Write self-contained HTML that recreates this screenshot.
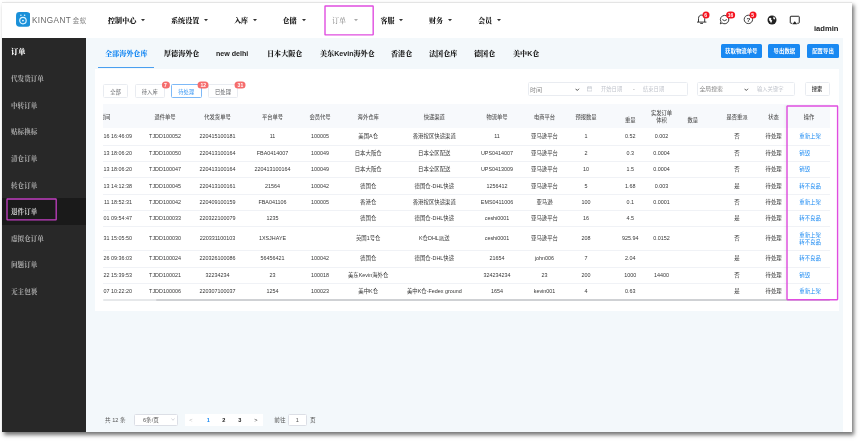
<!DOCTYPE html><html lang="zh-CN"><head><meta charset="utf-8"><title>退件订单</title><style>
*{box-sizing:border-box;margin:0;padding:0}
html,body{width:862px;height:442px;overflow:hidden;background:#fff}
body{position:relative;font-family:"Liberation Sans","Noto Sans CJK SC",sans-serif;color:#222;-webkit-font-smoothing:antialiased}
#wrap{position:absolute;left:0;top:0;width:862px;height:442px;will-change:transform}
.abs{position:absolute}
.t{position:absolute;white-space:nowrap;line-height:1;transform:translate(-50%,calc(-50% + 0.12em))}
.l{position:absolute;white-space:nowrap;line-height:1;transform:translate(0,calc(-50% + 0.12em))}
#frame{position:absolute;left:2px;top:2px;width:850px;height:430px;background:#fff;box-shadow:2px 3px 4px rgba(0,0,0,.55)}
#topline{position:absolute;left:2px;top:2px;width:850px;height:1px;background:#e4e4e4}
#side{position:absolute;left:2px;top:38px;width:84px;height:394px;background:#282828}
#main{position:absolute;left:86px;top:38px;width:757px;height:394px;background:#f3f8fb}
#panel{position:absolute;left:94.5px;top:69px;width:744.5px;height:242px;background:#fff}
.nav{font-size:7.1px;font-weight:900;color:#222;font-family:"Liberation Sans","Noto Serif CJK SC",serif}
.caret{position:absolute;width:0;height:0;border-left:1.9px solid transparent;border-right:1.9px solid transparent;border-top:2.1px solid #333}
.tab{font-size:7.1px;font-weight:900;color:#222;font-family:"Liberation Sans","Noto Serif CJK SC",serif}
.sb{font-size:6.6px;color:#9e9e9e;font-weight:900;font-family:"Liberation Sans","Noto Serif CJK SC",serif}
.sbh{font-size:7.2px;font-weight:900;color:#fff;font-family:"Liberation Sans","Noto Serif CJK SC",serif}
.bbtn{position:absolute;top:44.3px;height:13.4px;background:#1989f2;border-radius:1.5px;color:#fff;font-size:5.4px;font-weight:bold;text-align:center;line-height:14.8px;white-space:nowrap}
.obtn{position:absolute;top:83.7px;height:14px;border:1px solid #e9ecf1;border-radius:1.5px;background:#fff;color:#606266;font-size:5.3px;text-align:center;line-height:14.3px;white-space:nowrap}
.badge{position:absolute;height:7px;min-width:7px;border-radius:3.5px;background:#f5131f;color:#fff;font-size:5px;font-weight:bold;text-align:center;line-height:7.7px;padding:0 2.1px;transform:translate(-50%,-50%);white-space:nowrap}
.b2{background:#f56c6c;height:7.2px;border-radius:3.6px;line-height:8px;padding:0 2.7px}
.inp{position:absolute;top:82.3px;height:13.3px;border:1px solid #e9ecf1;border-radius:1.5px;background:#fff}
.th{font-size:5.3px;color:#5a5a5a;font-weight:500}
.td{font-size:5.4px;color:#363636}
.op{font-size:5.4px;color:#1989f2}
.row{position:absolute;left:103px;width:726.5px;height:1px;background:#f0f2f6}
.mg{position:absolute;border:0.9px solid #e23ee2;border-radius:0.5px}
.pg{font-size:5.6px;color:#555}
</style></head><body><div id="wrap">
<div id="frame"></div><div id="topline"></div>
<div id="side"></div><div id="main"></div><div id="panel"></div>
<svg class="abs" style="left:15.5px;top:11.9px" width="14.4" height="14.8" viewBox="0 0 31 32">
<rect x="0" y="0" width="31" height="32" rx="7.5" fill="#1a90d9"/>
<circle cx="15" cy="18.5" r="7" fill="none" stroke="#d9f2ff" stroke-width="2.6"/>
<circle cx="15" cy="18.5" r="2" fill="#e6f6ff"/>
<circle cx="10.5" cy="7" r="1.7" fill="#d9f2ff"/><circle cx="18.5" cy="7" r="1.7" fill="#d9f2ff"/>
</svg>
<span class="l " style="left:32px;top:20.4px;font-size:8.2px;color:#686868;letter-spacing:0.4px">KINGANT</span>
<span class="l " style="left:72.6px;top:20.6px;font-size:6.8px;color:#888">金蚁</span>
<span class="l nav" style="left:108px;top:20.8px;">控制中心</span>
<svg class="abs" style="left:140.8px;top:19.4px" width="4" height="2.2" viewBox="0 0 40 22"><path d="M0 0 H40 L20 22 Z" fill="#333"/></svg>
<span class="l nav" style="left:171px;top:20.8px;">系统设置</span>
<svg class="abs" style="left:203.8px;top:19.4px" width="4" height="2.2" viewBox="0 0 40 22"><path d="M0 0 H40 L20 22 Z" fill="#333"/></svg>
<span class="l nav" style="left:234px;top:20.8px;">入库</span>
<svg class="abs" style="left:252.8px;top:19.4px" width="4" height="2.2" viewBox="0 0 40 22"><path d="M0 0 H40 L20 22 Z" fill="#333"/></svg>
<span class="l nav" style="left:282.5px;top:20.8px;">仓储</span>
<svg class="abs" style="left:301.8px;top:19.4px" width="4" height="2.2" viewBox="0 0 40 22"><path d="M0 0 H40 L20 22 Z" fill="#333"/></svg>
<span class="l nav" style="left:332px;top:20.8px;color:#969696;font-weight:500">订单</span>
<svg class="abs" style="left:354.3px;top:19.4px" width="4" height="2.2" viewBox="0 0 40 22"><path d="M0 0 H40 L20 22 Z" fill="#aaa"/></svg>
<span class="l nav" style="left:380.5px;top:20.8px;">客服</span>
<svg class="abs" style="left:399.3px;top:19.4px" width="4" height="2.2" viewBox="0 0 40 22"><path d="M0 0 H40 L20 22 Z" fill="#333"/></svg>
<span class="l nav" style="left:429px;top:20.8px;">财务</span>
<svg class="abs" style="left:448.3px;top:19.4px" width="4" height="2.2" viewBox="0 0 40 22"><path d="M0 0 H40 L20 22 Z" fill="#333"/></svg>
<span class="l nav" style="left:478px;top:20.8px;">会员</span>
<svg class="abs" style="left:496.8px;top:19.4px" width="4" height="2.2" viewBox="0 0 40 22"><path d="M0 0 H40 L20 22 Z" fill="#333"/></svg>
<svg class="abs" style="left:323.1px;top:4.1px" width="52.2" height="32.9" viewBox="0 0 52.2 32.9"><rect x="2" y="2" width="48.2" height="28.9" rx="0.4" fill="none" stroke="#e04de0" stroke-width="1.4"/></svg>
<svg class="abs" style="left:695px;top:12px" width="14" height="14" viewBox="0 0 140 140" fill="none" stroke="#222" stroke-width="9">
<path d="M35 100 V66 C35 42 48 31 66 31 C84 31 97 42 97 66 V100" stroke-linejoin="round"/>
<path d="M24 101 H110" stroke-linecap="round"/><path d="M56 114 H76" stroke-linecap="round"/></svg>
<svg class="abs" style="left:718.9px;top:13.9px" width="11.2" height="11.2" viewBox="0 0 20 20" fill="none" stroke="#222" stroke-width="1.6">
<path d="M10 2.500 A7.500 7.500 0 1 1 5.500 16 L2.300 17.600 L3.500 13.800 A7.500 7.500 0 0 1 10 2.500 Z" stroke-linejoin="round"/>
<path d="M6.500 10.500 Q10 14 13.500 10.500" stroke-linecap="round"/></svg>
<svg class="abs" style="left:742.9px;top:14.1px" width="10.8" height="10.8" viewBox="0 0 20 20" fill="none" stroke="#222" stroke-width="1.6">
<circle cx="10" cy="10" r="7.800"/></svg>
<span class="t " style="left:748.4px;top:18.9px;font-size:6.2px;font-weight:bold;color:#222">?</span>
<svg class="abs" style="left:766.6px;top:14.5px" width="10" height="10" viewBox="0 0 20 20">
<circle cx="10" cy="10" r="9" fill="#222"/>
<path d="M4 6.500 L7 5.500 L9 7.500 L8 9.500 L10.500 11 L9.500 13.500 L8 16.500 L6.500 13 L4.500 11 Z" fill="#fff"/>
<path d="M11.500 2.800 L15 4.500 L16.500 8 L14 9 L12.500 7 L13 5 Z" fill="#fff"/></svg>
<svg class="abs" style="left:789px;top:14.8px" width="11.500" height="10" viewBox="0 0 23 20" fill="none" stroke="#222" stroke-width="2">
<path d="M6.5 16.5 H4 A1.500 1.500 0 0 1 2.500 15 V4 A1.500 1.500 0 0 1 4 2.500 H19 A1.500 1.500 0 0 1 20.500 4 V15 A1.500 1.500 0 0 1 19 16.500 H16.5" stroke-linejoin="round"/>
<path d="M11.500 12.5 L16.5 18.5 H6.5 Z" fill="#222" stroke="none"/></svg>
<span class="badge" style="left:705.6px;top:15.3px">6</span>
<span class="badge" style="left:730.6px;top:15.3px">16</span>
<span class="badge" style="left:752.6px;top:15.3px">5</span>
<span class="l " style="left:814px;top:27.7px;font-size:7.6px;font-weight:bold;color:#222">iadmin</span>
<div class="abs" style="left:2px;top:198px;width:84px;height:26.5px;background:#1a1a1a"></div>
<span class="l sbh" style="left:11px;top:51.1px;">订单</span>
<span class="l sb" style="left:11px;top:78.7px;">代发货订单</span>
<span class="l sb" style="left:11px;top:105.6px;">中转订单</span>
<span class="l sb" style="left:11px;top:132.1px;">贴标换标</span>
<span class="l sb" style="left:11px;top:158.8px;">清仓订单</span>
<span class="l sb" style="left:11px;top:185.6px;">转仓订单</span>
<span class="l sb" style="left:11px;top:211.9px;color:#d6d6d6;font-weight:700">退件订单</span>
<span class="l sb" style="left:11px;top:238.7px;">虚拟仓订单</span>
<span class="l sb" style="left:11px;top:265.2px;">问题订单</span>
<span class="l sb" style="left:11px;top:291.8px;">无主包裹</span>
<svg class="abs" style="left:5.4px;top:197.4px" width="53.2" height="24.9" viewBox="0 0 53.2 24.9"><rect x="2" y="2" width="49.2" height="20.9" rx="0.4" fill="none" stroke="#c23fc2" stroke-width="1.3"/></svg>
<span class="l tab" style="left:105px;top:53.7px;color:#1989f2">全部海外仓库</span>
<span class="l tab" style="left:164px;top:53.7px;">厚德海外仓</span>
<span class="l tab" style="left:216px;top:53.7px;">new delhi</span>
<span class="l tab" style="left:267px;top:53.7px;">日本大阪仓</span>
<span class="l tab" style="left:320px;top:53.7px;">美东Kevin海外仓</span>
<span class="l tab" style="left:391px;top:53.7px;">香港仓</span>
<span class="l tab" style="left:429px;top:53.7px;">法国仓库</span>
<span class="l tab" style="left:474px;top:53.7px;">德国仓</span>
<span class="l tab" style="left:513px;top:53.7px;">美中K仓</span>
<div class="abs" style="left:98px;top:67.4px;width:56px;height:1px;background:#4a9ff0"></div>
<div class="bbtn" style="left:721px;width:40.6px">获取物流单号</div>
<div class="bbtn" style="left:768.4px;width:32px">导出数据</div>
<div class="bbtn" style="left:807px;width:32px">配置导出</div>
<div class="obtn" style="left:103px;width:25px;">全部</div>
<div class="obtn" style="left:135px;width:29.5px;">待入库</div>
<div class="obtn" style="left:171px;width:30.5px;border-color:#7db9f7;color:#3a97f3;">待处理</div>
<div class="obtn" style="left:208px;width:30px;">已处理</div>
<span class="badge b2" style="left:165.5px;top:84.5px">7</span>
<span class="badge b2" style="left:203.2px;top:84.5px">12</span>
<span class="badge b2" style="left:240.4px;top:84.5px">31</span>
<div class="inp" style="left:528px;width:159.500px"></div>
<span class="l " style="left:530px;top:89px;font-size:6px;color:#888">时间</span>
<svg class="abs" style="left:575px;top:87.500px" width="4.500" height="3.500" viewBox="0 0 9 7" fill="none" stroke="#444" stroke-width="1.800"><path d="M1 1.500 L4.500 5 L8 1.500"/></svg>
<svg class="abs" style="left:586.500px;top:86px" width="5.500" height="5.500" viewBox="0 0 11 11" fill="none" stroke="#c0c4cc" stroke-width="1.200"><rect x="1" y="2" width="9" height="8"/><path d="M1 4.500 H10 M3.500 0.500 V3 M7.500 0.500 V3"/></svg>
<span class="l " style="left:601px;top:89px;font-size:5.3px;color:#c0c4cc">开始日期</span>
<span class="t " style="left:634px;top:89px;font-size:5.3px;color:#999">-</span>
<span class="l " style="left:643px;top:89px;font-size:5.3px;color:#c0c4cc">结束日期</span>
<div class="inp" style="left:697.300px;width:98.200px"></div>
<span class="l " style="left:699.4px;top:89px;font-size:5.900px;color:#888">全局搜索</span>
<svg class="abs" style="left:744.300px;top:87.500px" width="4.500" height="3.500" viewBox="0 0 9 7" fill="none" stroke="#444" stroke-width="1.800"><path d="M1 1.500 L4.500 5 L8 1.500"/></svg>
<span class="l " style="left:757px;top:89px;font-size:5.300px;color:#c0c4cc">输入关键字</span>
<div class="obtn" style="left:804.600px;top:82.3px;width:25px;height:13.3px;line-height:13.6px;color:#333;font-weight:500">搜索</div>
<div class="abs" style="left:103px;top:104px;width:726.500px;height:24px;background:#f7f9fc"></div>
<span class="t th" style="left:165px;top:116.6px;">退件单号</span>
<span class="t th" style="left:217.5px;top:116.6px;">代发货单号</span>
<span class="t th" style="left:272.5px;top:116.6px;">平台单号</span>
<span class="t th" style="left:320px;top:116.6px;">会员代号</span>
<span class="t th" style="left:368.2px;top:116.6px;">海外仓库</span>
<span class="t th" style="left:434.3px;top:116.6px;">快递渠道</span>
<span class="t th" style="left:497px;top:116.6px;">物流单号</span>
<span class="t th" style="left:544.5px;top:116.6px;">电商平台</span>
<span class="t th" style="left:586px;top:116.6px;">预报数量</span>
<span class="t th" style="left:630.2px;top:120px;">重量</span>
<span class="t th" style="left:661.5px;top:113.2px;">实发订单</span>
<span class="t th" style="left:661.5px;top:119.5px;">体积</span>
<span class="t th" style="left:692.8px;top:120px;">数量</span>
<span class="t th" style="left:737px;top:116.6px;">是否重派</span>
<span class="t th" style="left:773.6px;top:116.6px;">状态</span>
<div class="row" style="top:144.6px"></div>
<div class="row" style="top:161px"></div>
<div class="row" style="top:177.3px"></div>
<div class="row" style="top:193.6px"></div>
<div class="row" style="top:209.8px"></div>
<div class="row" style="top:226.2px"></div>
<div class="row" style="top:250.2px"></div>
<div class="row" style="top:266.6px"></div>
<div class="row" style="top:283px"></div>
<span class="t td" style="left:165px;top:136.3px;">TJDD100052</span>
<span class="t td" style="left:217.5px;top:136.3px;">220415100181</span>
<span class="t td" style="left:272.5px;top:136.3px;">11</span>
<span class="t td" style="left:320px;top:136.3px;">100005</span>
<span class="t td" style="left:368.2px;top:136.3px;">美国A仓</span>
<span class="t td" style="left:434.3px;top:136.3px;">香港按区快递渠道</span>
<span class="t td" style="left:497px;top:136.3px;">11</span>
<span class="t td" style="left:544.5px;top:136.3px;">亚马逊平台</span>
<span class="t td" style="left:586px;top:136.3px;">1</span>
<span class="t td" style="left:630.2px;top:136.3px;">0.52</span>
<span class="t td" style="left:661.5px;top:136.3px;">0.002</span>
<span class="t td" style="left:737px;top:136.3px;">否</span>
<span class="t td" style="left:773.6px;top:136.3px;">待处理</span>
<span class="l op" style="left:799.3px;top:136.3px;">重新上架</span>
<span class="t td" style="left:165px;top:152.9px;">TJDD100050</span>
<span class="t td" style="left:217.5px;top:152.9px;">220413100164</span>
<span class="t td" style="left:272.5px;top:152.9px;">FBA0414007</span>
<span class="t td" style="left:320px;top:152.9px;">100049</span>
<span class="t td" style="left:368.2px;top:152.9px;">日本大阪仓</span>
<span class="t td" style="left:434.3px;top:152.9px;">日本全区配送</span>
<span class="t td" style="left:497px;top:152.9px;">UPS0414007</span>
<span class="t td" style="left:544.5px;top:152.9px;">亚马逊平台</span>
<span class="t td" style="left:586px;top:152.9px;">2</span>
<span class="t td" style="left:630.2px;top:152.9px;">0.3</span>
<span class="t td" style="left:661.5px;top:152.9px;">0.0004</span>
<span class="t td" style="left:737px;top:152.9px;">否</span>
<span class="t td" style="left:773.6px;top:152.9px;">待处理</span>
<span class="l op" style="left:799.3px;top:152.9px;">销毁</span>
<span class="t td" style="left:165px;top:169.2px;">TJDD100047</span>
<span class="t td" style="left:217.5px;top:169.2px;">220413100164</span>
<span class="t td" style="left:272.5px;top:169.2px;">220413100164</span>
<span class="t td" style="left:320px;top:169.2px;">100049</span>
<span class="t td" style="left:368.2px;top:169.2px;">日本大阪仓</span>
<span class="t td" style="left:434.3px;top:169.2px;">日本全区配送</span>
<span class="t td" style="left:497px;top:169.2px;">UPS0413009</span>
<span class="t td" style="left:544.5px;top:169.2px;">亚马逊平台</span>
<span class="t td" style="left:586px;top:169.2px;">10</span>
<span class="t td" style="left:630.2px;top:169.2px;">1.5</span>
<span class="t td" style="left:661.5px;top:169.2px;">0.0004</span>
<span class="t td" style="left:737px;top:169.2px;">否</span>
<span class="t td" style="left:773.6px;top:169.2px;">待处理</span>
<span class="l op" style="left:799.3px;top:169.2px;">销毁</span>
<span class="t td" style="left:165px;top:185.5px;">TJDD100045</span>
<span class="t td" style="left:217.5px;top:185.5px;">220413100161</span>
<span class="t td" style="left:272.5px;top:185.5px;">21564</span>
<span class="t td" style="left:320px;top:185.5px;">100042</span>
<span class="t td" style="left:368.2px;top:185.5px;">德国仓</span>
<span class="t td" style="left:434.3px;top:185.5px;">德国仓-DHL快递</span>
<span class="t td" style="left:497px;top:185.5px;">1256412</span>
<span class="t td" style="left:544.5px;top:185.5px;">亚马逊平台</span>
<span class="t td" style="left:586px;top:185.5px;">5</span>
<span class="t td" style="left:630.2px;top:185.5px;">1.68</span>
<span class="t td" style="left:661.5px;top:185.5px;">0.003</span>
<span class="t td" style="left:737px;top:185.5px;">是</span>
<span class="t td" style="left:773.6px;top:185.5px;">待处理</span>
<span class="l op" style="left:799.3px;top:185.5px;">转不良品</span>
<span class="t td" style="left:165px;top:201.6px;">TJDD100042</span>
<span class="t td" style="left:217.5px;top:201.6px;">220409100159</span>
<span class="t td" style="left:272.5px;top:201.6px;">FBA041106</span>
<span class="t td" style="left:320px;top:201.6px;">100005</span>
<span class="t td" style="left:368.2px;top:201.6px;">香港仓</span>
<span class="t td" style="left:434.3px;top:201.6px;">香港按区快递渠道</span>
<span class="t td" style="left:497px;top:201.6px;">EMS0411006</span>
<span class="t td" style="left:544.5px;top:201.6px;">亚马逊</span>
<span class="t td" style="left:586px;top:201.6px;">100</span>
<span class="t td" style="left:630.2px;top:201.6px;">0.1</span>
<span class="t td" style="left:661.5px;top:201.6px;">0.0001</span>
<span class="t td" style="left:737px;top:201.6px;">否</span>
<span class="t td" style="left:773.6px;top:201.6px;">待处理</span>
<span class="l op" style="left:799.3px;top:201.6px;">重新上架</span>
<span class="t td" style="left:165px;top:217.9px;">TJDD100033</span>
<span class="t td" style="left:217.5px;top:217.9px;">220322100079</span>
<span class="t td" style="left:272.5px;top:217.9px;">1235</span>
<span class="t td" style="left:368.2px;top:217.9px;">德国仓</span>
<span class="t td" style="left:434.3px;top:217.9px;">德国仓-DHL快递</span>
<span class="t td" style="left:497px;top:217.9px;">ceshi0001</span>
<span class="t td" style="left:544.5px;top:217.9px;">亚马逊平台</span>
<span class="t td" style="left:586px;top:217.9px;">16</span>
<span class="t td" style="left:630.2px;top:217.9px;">4.5</span>
<span class="t td" style="left:737px;top:217.9px;">是</span>
<span class="t td" style="left:773.6px;top:217.9px;">待处理</span>
<span class="l op" style="left:799.3px;top:217.9px;">转不良品</span>
<span class="t td" style="left:165px;top:238.2px;">TJDD100030</span>
<span class="t td" style="left:217.5px;top:238.2px;">220331100103</span>
<span class="t td" style="left:272.5px;top:238.2px;">1XSJHAYE</span>
<span class="t td" style="left:368.2px;top:238.2px;">英国1号仓</span>
<span class="t td" style="left:434.3px;top:238.2px;">K仓DHL派送</span>
<span class="t td" style="left:497px;top:238.2px;">ceshi0001</span>
<span class="t td" style="left:544.5px;top:238.2px;">亚马逊平台</span>
<span class="t td" style="left:586px;top:238.2px;">208</span>
<span class="t td" style="left:630.2px;top:238.2px;">925.94</span>
<span class="t td" style="left:661.5px;top:238.2px;">0.0152</span>
<span class="t td" style="left:737px;top:238.2px;">否</span>
<span class="t td" style="left:773.6px;top:238.2px;">待处理</span>
<span class="l op" style="left:799.3px;top:234.5px;">重新上架</span>
<span class="l op" style="left:799.3px;top:241.89999999999998px;">转不良品</span>
<span class="t td" style="left:165px;top:258.3px;">TJDD100024</span>
<span class="t td" style="left:217.5px;top:258.3px;">220326100086</span>
<span class="t td" style="left:272.5px;top:258.3px;">56456421</span>
<span class="t td" style="left:320px;top:258.3px;">100042</span>
<span class="t td" style="left:368.2px;top:258.3px;">德国仓</span>
<span class="t td" style="left:434.3px;top:258.3px;">德国仓-DHL快递</span>
<span class="t td" style="left:497px;top:258.3px;">21654</span>
<span class="t td" style="left:544.5px;top:258.3px;">john006</span>
<span class="t td" style="left:586px;top:258.3px;">7</span>
<span class="t td" style="left:630.2px;top:258.3px;">2.04</span>
<span class="t td" style="left:737px;top:258.3px;">是</span>
<span class="t td" style="left:773.6px;top:258.3px;">待处理</span>
<span class="l op" style="left:799.3px;top:258.3px;">转不良品</span>
<span class="t td" style="left:165px;top:274.8px;">TJDD100021</span>
<span class="t td" style="left:217.5px;top:274.8px;">32234234</span>
<span class="t td" style="left:272.5px;top:274.8px;">23</span>
<span class="t td" style="left:320px;top:274.8px;">100018</span>
<span class="t td" style="left:368.2px;top:274.8px;">美东Kevin海外仓</span>
<span class="t td" style="left:497px;top:274.8px;">324234234</span>
<span class="t td" style="left:544.5px;top:274.8px;">23</span>
<span class="t td" style="left:586px;top:274.8px;">200</span>
<span class="t td" style="left:630.2px;top:274.8px;">1000</span>
<span class="t td" style="left:661.5px;top:274.8px;">14400</span>
<span class="t td" style="left:737px;top:274.8px;">否</span>
<span class="t td" style="left:773.6px;top:274.8px;">待处理</span>
<span class="l op" style="left:799.3px;top:274.8px;">销毁</span>
<span class="t td" style="left:165px;top:291px;">TJDD100006</span>
<span class="t td" style="left:217.5px;top:291px;">220307100037</span>
<span class="t td" style="left:272.5px;top:291px;">1254</span>
<span class="t td" style="left:320px;top:291px;">100023</span>
<span class="t td" style="left:368.2px;top:291px;">美中K仓</span>
<span class="t td" style="left:434.3px;top:291px;">美中K仓-Fedex ground</span>
<span class="t td" style="left:497px;top:291px;">1654</span>
<span class="t td" style="left:544.5px;top:291px;">kevin001</span>
<span class="t td" style="left:586px;top:291px;">4</span>
<span class="t td" style="left:630.2px;top:291px;">0.63</span>
<span class="t td" style="left:737px;top:291px;">是</span>
<span class="t td" style="left:773.6px;top:291px;">待处理</span>
<span class="l op" style="left:799.3px;top:291px;">重新上架</span>
<span class="t th" style="left:809px;top:116.6px;">操作</span>
<div class="abs" style="left:103px;top:104.5px;width:40px;height:195px;overflow:hidden">
<span class="l th" style="left:0px;top:12.1px;transform:translate(-3.2px,calc(-50% + 0.12em))">时间</span>
<span class="l td" style="left:29px;top:31.80000000000001px;transform:translate(-100%,calc(-50% + 0.12em))">16 16:46:09</span>
<span class="l td" style="left:29px;top:48.400000000000006px;transform:translate(-100%,calc(-50% + 0.12em))">13 18:06:20</span>
<span class="l td" style="left:29px;top:64.69999999999999px;transform:translate(-100%,calc(-50% + 0.12em))">13 18:06:20</span>
<span class="l td" style="left:29px;top:81.0px;transform:translate(-100%,calc(-50% + 0.12em))">13 14:12:38</span>
<span class="l td" style="left:29px;top:97.1px;transform:translate(-100%,calc(-50% + 0.12em))">11 18:52:31</span>
<span class="l td" style="left:29px;top:113.4px;transform:translate(-100%,calc(-50% + 0.12em))">01 09:54:47</span>
<span class="l td" style="left:29px;top:133.7px;transform:translate(-100%,calc(-50% + 0.12em))">31 15:05:50</span>
<span class="l td" style="left:29px;top:153.8px;transform:translate(-100%,calc(-50% + 0.12em))">26 09:36:03</span>
<span class="l td" style="left:29px;top:170.3px;transform:translate(-100%,calc(-50% + 0.12em))">22 15:39:53</span>
<span class="l td" style="left:29px;top:186.5px;transform:translate(-100%,calc(-50% + 0.12em))">07 10:22:20</span>
</div>
<div class="abs" style="left:783px;top:104.500px;width:4.500px;height:194.500px;background:linear-gradient(to right,rgba(0,0,0,0),rgba(0,0,0,.06))"></div>
<div class="abs" style="left:103px;top:299px;width:726.500px;height:2.400px;background:#e6e8ea;border-radius:1.200px"></div>
<div class="abs" style="left:156px;top:299px;width:673.500px;height:2.400px;background:#cfd1d4;border-radius:1.200px"></div>
<svg class="abs" style="left:784.7px;top:103.5px" width="54.6" height="197.7" viewBox="0 0 54.6 197.7"><rect x="2" y="2" width="50.6" height="193.7" rx="0.4" fill="none" stroke="#e04de0" stroke-width="1.4"/></svg>
<span class="l pg" style="left:105px;top:419.5px;">共 12 条</span>
<div class="abs" style="left:134px;top:414px;width:43.800px;height:11.500px;background:#fff;border:0.500px solid #dcdfe6;border-radius:1.500px"></div>
<span class="l pg" style="left:143px;top:419.5px;">6条/页</span>
<svg class="abs" style="left:170.700px;top:418.300px" width="4" height="3" viewBox="0 0 8 6" fill="none" stroke="#c0c4cc" stroke-width="1.400"><path d="M1 1 L4 4.500 L7 1"/></svg>
<div class="abs" style="left:185px;top:414px;width:77.700px;height:11.500px;background:#fff"></div>
<span class="t pg" style="left:191px;top:419.5px;color:#bbb">&lt;</span>
<span class="t pg" style="left:208.4px;top:419.5px;color:#1989f2;font-weight:bold">1</span>
<span class="t pg" style="left:223.7px;top:419.5px;color:#222;font-weight:bold">2</span>
<span class="t pg" style="left:239.7px;top:419.5px;color:#222;font-weight:bold">3</span>
<span class="t pg" style="left:256px;top:419.5px;color:#333">&gt;</span>
<span class="l pg" style="left:274.3px;top:419.5px;">前往</span>
<div class="abs" style="left:287.500px;top:414px;width:19.500px;height:11.500px;background:#fff;border:0.500px solid #dcdfe6;border-radius:1.500px"></div>
<span class="t pg" style="left:297.3px;top:419.5px;">1</span>
<span class="l pg" style="left:310px;top:419.5px;">页</span>
</div></body></html>
